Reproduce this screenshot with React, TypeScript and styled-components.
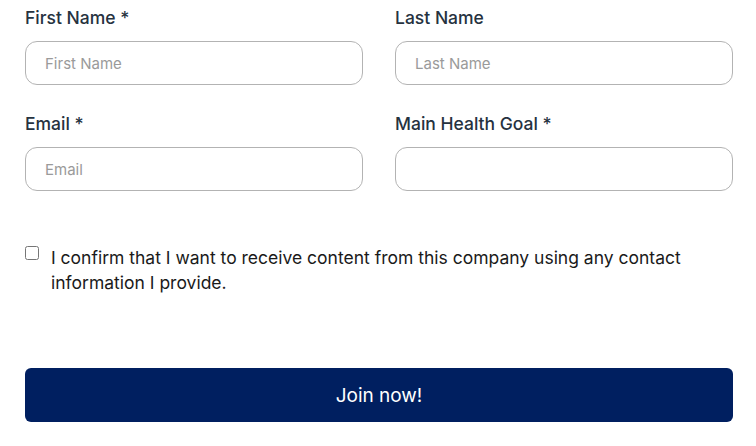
import React from "react";
import styled, { createGlobalStyle } from "styled-components";

const GlobalStyle = createGlobalStyle`
  body {
    margin: 0;
    background: #fff;
    font-family: Inter, "Noto Sans", sans-serif;
  }
`;

const App = () => {
  return (
    <>
      <GlobalStyle />
      <Form onSubmit={(e) => e.preventDefault()}>
        <FieldGrid>
          <Field>
            <Label>First Name *</Label>
            <Input placeholder="First Name" />
          </Field>
          <Field>
            <Label>Last Name</Label>
            <Input placeholder="Last Name" />
          </Field>
          <Field>
            <Label>Email *</Label>
            <Input placeholder="Email" />
          </Field>
          <Field>
            <Label>Main Health Goal *</Label>
            <Input />
          </Field>
        </FieldGrid>
        <Consent>
          <Checkbox type="checkbox" />
          <span>
            I confirm that I want to receive content from this company using any
            contact information I provide.
          </span>
        </Consent>
        <SubmitButton type="submit">Join now!</SubmitButton>
      </Form>
    </>
  );
};

export default App;

const Form = styled.form`
  width: 708px;
  padding: 6px 0 0 25px;
  display: flex;
  flex-direction: column;
`;

const FieldGrid = styled.div`
  display: grid;
  grid-template-columns: 1fr 1fr;
  column-gap: 32px;
  row-gap: 27px;
`;

const Field = styled.label`
  display: flex;
  flex-direction: column;
  gap: 11px;
`;

const Label = styled.span`
  font-size: 17.5px;
  line-height: 24px;
  font-weight: 500;
  color: #26323f;
`;

const Input = styled.input`
  box-sizing: border-box;
  height: 44px;
  width: 100%;
  border: 1px solid #b3b3b3;
  border-radius: 12px;
  padding: 0 19px;
  font-family: inherit;
  font-size: 15px;
  color: #26323f;
  background: #fff;
  outline: none;

  &::placeholder {
    color: #9a9a9a;
  }
`;

const Consent = styled.label`
  display: flex;
  align-items: flex-start;
  gap: 12px;
  margin-top: 54px;
  font-size: 17.5px;
  line-height: 25px;
  color: #1a1a1a;
  padding-right: 30px;
`;

const Checkbox = styled.input`
  flex: none;
  width: 14px;
  height: 14px;
  margin: 1px 0 0 0;
`;

const SubmitButton = styled.button`
  margin-top: 73px;
  height: 54px;
  border: none;
  border-radius: 6px;
  background: #001f60;
  color: #fff;
  font-family: inherit;
  font-size: 19px;
  font-weight: 400;
  cursor: pointer;
`;
